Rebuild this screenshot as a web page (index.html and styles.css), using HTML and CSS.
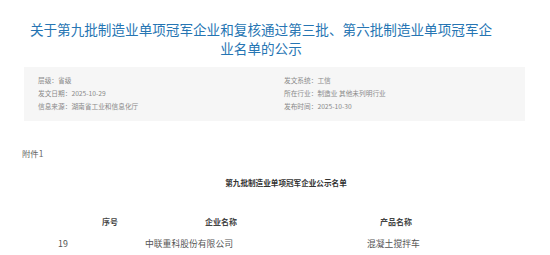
FILE: index.html
```html
<!DOCTYPE html>
<html lang="zh-CN">

<head>
    <meta charset="UTF-8">
    <meta name="viewport" content="width=device-width, initial-scale=1.0">
    <title>关于第九批制造业单项冠军企业和复核通过第三批、第六批制造业单项冠军企业名单的公示</title>
    <link rel="stylesheet" href="styles.css">
</head>

<body>
    <div class="page">
        <h1 class="title">关于第九批制造业单项冠军企业和复核通过第三批、第六批制造业单项冠军企业名单的公示</h1>

        <div class="meta">
            <div class="meta-col">
                <p>层级：省级</p>
                <p>发文日期：2025-10-29</p>
                <p>信息来源：湖南省工业和信息化厅</p>
            </div>
            <div class="meta-col">
                <p>发文系统：工信</p>
                <p>所在行业：制造业 其他未列明行业</p>
                <p>发布时间：2025-10-30</p>
            </div>
        </div>

        <div class="content">
            <p class="attach">附件1</p>
            <h3 class="list-title">第九批制造业单项冠军企业公示名单</h3>

            <div class="list-head">
                <span>序号</span>
                <span>企业名称</span>
                <span>产品名称</span>
            </div>
            <div class="list-row">
                <span>19</span>
                <span>中联重科股份有限公司</span>
                <span>混凝土搅拌车</span>
            </div>
        </div>
    </div>
</body>

</html>
```

FILE: styles.css
```css
body {
    font-family: "Noto Sans CJK SC", "Noto Sans", sans-serif;
    margin: 0;
    padding: 0;
    background-color: #fff;
}

.page {
    padding: 0 22px;
}

.title {
    width: 470px;
    margin: 0 0 0 4px;
    padding-top: 20px;
    font-size: 13.6px;
    line-height: 19px;
    font-weight: normal;
    color: #2675b3;
    text-align: center;
}

.meta {
    display: flex;
    margin: 9px 0 0 2px;
    width: 501px;
    box-sizing: border-box;
    padding: 7px 14px 8px;
    background-color: #f6f6f6;
}

.meta-col {
    flex: 0 0 246px;
}

.meta-col + .meta-col {
    flex: 1;
}

.meta-col p {
    margin: 0;
    font-size: 6.7px;
    line-height: 13px;
    color: #8a8a8a;
}

.content {
    padding-top: 26px;
}

.attach {
    margin: 0;
    font-size: 8.4px;
    line-height: 12px;
    color: #666;
}

.list-title {
    margin: 18px 0 0;
    font-size: 7.6px;
    line-height: 12px;
    font-weight: bold;
    color: #333;
    text-align: center;
    padding-left: 22px;
}

.list-head {
    display: grid;
    grid-template-columns: 103px 175px 1fr;
    padding-left: 80px;
    margin-top: 27px;
    font-size: 8px;
    line-height: 12px;
    font-weight: bold;
    color: #444;
}

.list-row {
    display: grid;
    grid-template-columns: 87px 222px 1fr;
    padding-left: 36px;
    margin-top: 10px;
    font-size: 8.8px;
    line-height: 12px;
    color: #555;
}
```
